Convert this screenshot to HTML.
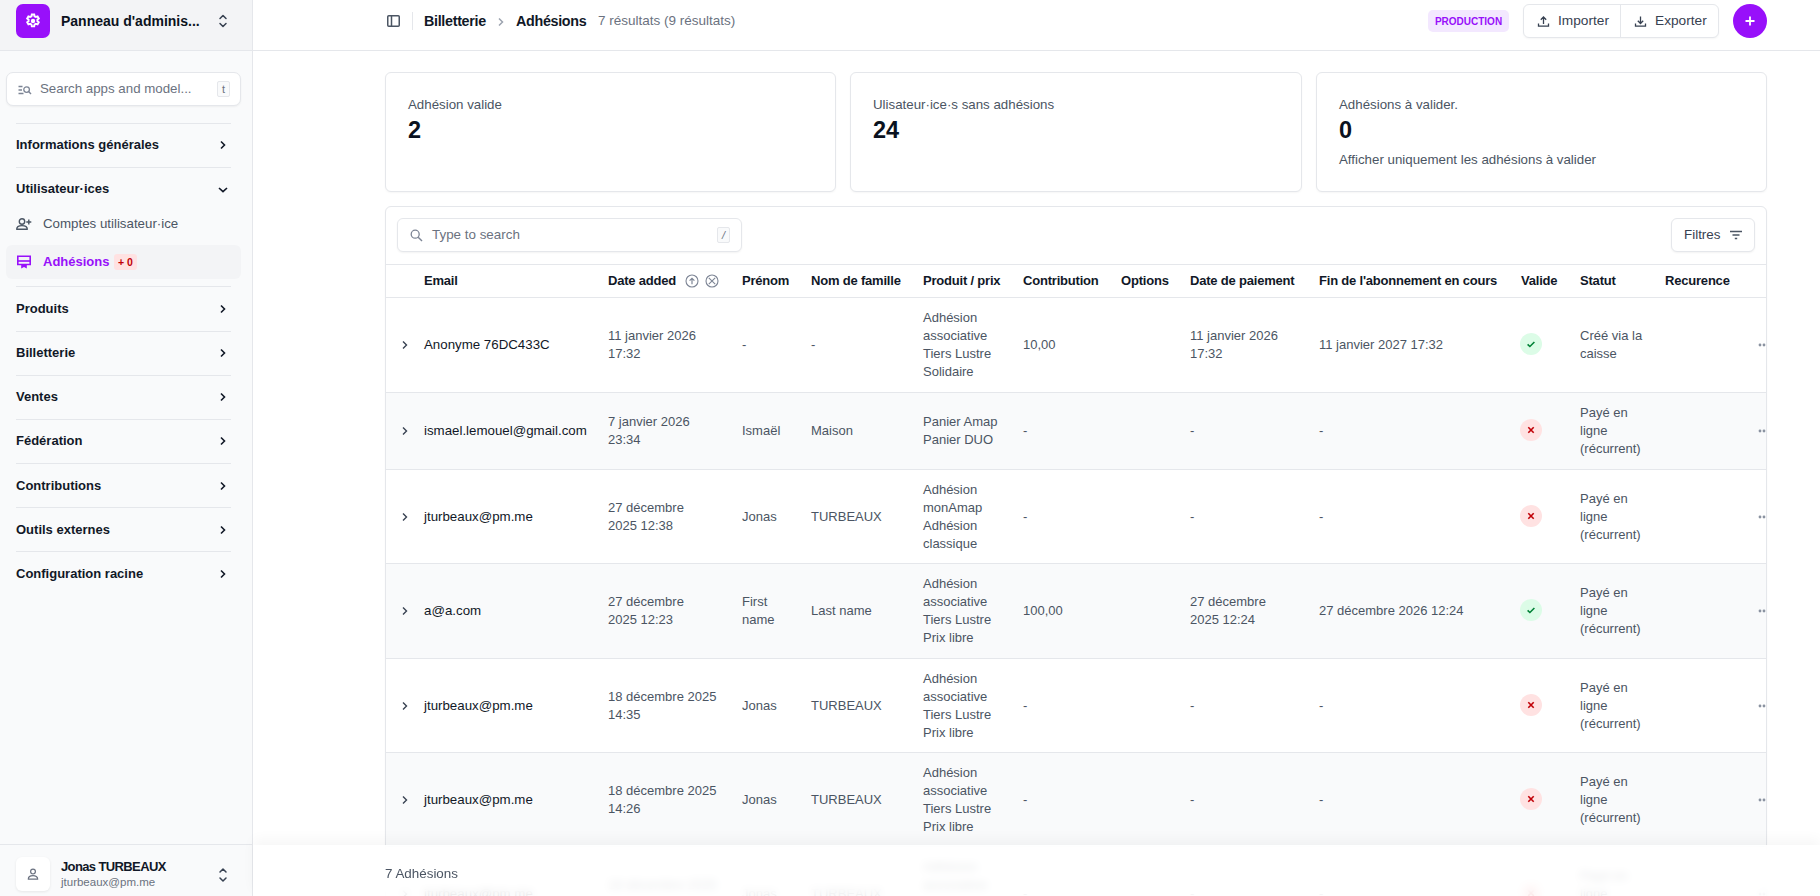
<!DOCTYPE html>
<html lang="fr">
<head>
<meta charset="utf-8">
<title>Adhésions</title>
<style>
*{box-sizing:border-box;margin:0;padding:0}
html,body{width:1820px;height:896px;overflow:hidden;background:#fff}
body{font-family:"Liberation Sans",sans-serif;color:#4b5563;position:relative;font-size:13px;line-height:18px}
.abs{position:absolute}
.nw{white-space:nowrap}
svg{display:block}
/* sidebar */
#sb{position:absolute;left:0;top:0;width:253px;height:896px;background:#f9fafb;border-right:1px solid #e5e7eb}
#sbh{position:absolute;left:0;top:0;width:252px;height:51px;background:#f3f4f6;border-bottom:1px solid #e5e7eb}
.sep{position:absolute;left:16px;width:215px;height:1px;background:#e5e7eb}
.nav{position:absolute;left:16px;font-weight:700;color:#111827;font-size:13px;line-height:18px;white-space:nowrap}
.chev{position:absolute;left:216px}
/* header */
#hdr{position:absolute;left:253px;top:0;width:1567px;height:51px;background:#fff;border-bottom:1px solid #e5e7eb}
/* cards */
.card{position:absolute;top:72px;height:120px;border:1px solid #e5e7eb;border-radius:6px;background:#fff;box-shadow:0 1px 2px rgba(0,0,0,.04)}
.card .lbl{position:absolute;left:22px;top:23px;font-size:13.3px;color:#4b5563;white-space:nowrap}
.card .val{position:absolute;left:22px;top:43px;font-size:23.5px;line-height:28px;font-weight:700;color:#0b1220;white-space:nowrap}
.card .sub{position:absolute;left:22px;top:78px;font-size:13.3px;color:#4b5563;white-space:nowrap}

#tbl{position:absolute;left:385px;top:206px;width:1382px;height:720px;border:1px solid #e5e7eb;border-radius:6px;background:#fff;overflow:hidden;box-shadow:0 1px 2px rgba(0,0,0,.04)}
.row{position:absolute;left:0;width:1380px}
.hl{position:absolute;left:0;width:1380px;height:1px;background:#e5e7eb}
.cell{position:absolute;top:0;height:100%;display:flex;align-items:center;white-space:nowrap;font-size:13px;line-height:18px;color:#4b5563}
.cell.em{color:#111827;font-size:13.3px}
.rchev{position:absolute;left:15px;top:50%;margin-top:-5px}
.rdots{position:absolute;left:1372px;top:50%;margin-top:-2px}
.th{position:absolute;top:65px;font-size:13px;line-height:18px;font-weight:700;color:#111827;white-space:nowrap;letter-spacing:-0.2px}
</style>
</head>
<body>
<!-- SIDEBAR -->
<div id="sb">
  <div id="sbh">
    <div class="abs" style="left:16px;top:4px;width:34px;height:34px;border-radius:7px;background:#9810fa"></div>
    <svg class="abs" style="left:25px;top:13px" width="16" height="16" viewBox="0 0 24 24"><path fill="none" stroke="#fff" stroke-width="2.9" stroke-linejoin="miter" d="M10.2 2.2h3.6l.5 2.7c.7.3 1.4.7 2 1.1l2.6-.9 1.8 3.1-2.1 1.8c.1.7.1 1.5 0 2.2l2.1 1.8-1.8 3.1-2.6-.9c-.6.5-1.3.9-2 1.2l-.5 2.7h-3.6l-.5-2.7c-.7-.3-1.4-.7-2-1.2l-2.6.9-1.8-3.1 2.1-1.8c-.1-.7-.1-1.5 0-2.2l-2.1-1.8 1.8-3.1 2.6.9c.6-.4 1.3-.8 2-1.1z"/><circle cx="12" cy="12" r="3.3" fill="#fff"/></svg>
    <div class="abs nw" style="left:61px;top:12px;font-size:14px;line-height:18px;font-weight:700;color:#0b1220">Panneau d'adminis...</div>
    <svg class="abs" style="left:217px;top:13px" width="12" height="16" viewBox="0 0 12 16"><path d="M3 5.5 6 2.5 9 5.5M3 10.5 6 13.5 9 10.5" fill="none" stroke="#374151" stroke-width="1.5" stroke-linecap="round" stroke-linejoin="round"/></svg>
  </div>
  <div class="abs" style="left:6px;top:72px;width:235px;height:34px;background:#fff;border:1px solid #e5e7eb;border-radius:7px;box-shadow:0 1px 2px rgba(0,0,0,.05)">
    <svg class="abs" style="left:11px;top:12px" width="14" height="10" viewBox="0 0 14 10"><path d="M0.5 1.5h4M0.5 5h3.5M0.5 8.5h5" stroke="#7d8595" stroke-width="1.3"/><circle cx="8.6" cy="4.6" r="2.8" fill="none" stroke="#7d8595" stroke-width="1.3"/><path d="M10.6 6.6 13 9" stroke="#7d8595" stroke-width="1.4"/></svg>
    <div class="abs nw" style="left:33px;top:7px;font-size:13.3px;line-height:18px;color:#6b7280">Search apps and model...</div>
    <div class="abs" style="left:210px;top:8px;width:13px;height:16px;border:1px solid #e5e7eb;border-radius:2px;background:#f9fafb;font-size:11px;line-height:14px;text-align:center;color:#6b7280">t</div>
  </div>
  <div class="sep" style="top:123px"></div>
  <div class="nav" style="top:136px">Informations générales</div>
  <svg class="chev" style="top:138px" width="14" height="14" viewBox="0 0 14 14"><path d="M5 3.5 8.5 7 5 10.5" fill="none" stroke="#111827" stroke-width="1.6"/></svg>
  <div class="sep" style="top:167px"></div>
  <div class="nav" style="top:180px">Utilisateur·ices</div>
  <svg class="chev" style="top:183px" width="14" height="14" viewBox="0 0 14 14"><path d="M3 5 7 8.7 11 5" fill="none" stroke="#111827" stroke-width="1.6"/></svg>
  <svg class="abs" style="left:15px;top:216px" width="18" height="16" viewBox="0 0 18 16"><circle cx="7" cy="5.5" r="2.7" fill="none" stroke="#4b5563" stroke-width="1.4"/><path d="M1.7 13.3c0-2.3 2.4-3.7 5.3-3.7s5.3 1.4 5.3 3.7z" fill="none" stroke="#4b5563" stroke-width="1.4" stroke-linejoin="round"/><path d="M13.8 3.5v5M11.3 6h5" stroke="#4b5563" stroke-width="1.4"/></svg>
  <div class="abs nw" style="left:43px;top:215px;font-size:13.3px;line-height:18px;color:#4b5563">Comptes utilisateur·ice</div>
  <div class="abs" style="left:6px;top:245px;width:235px;height:34px;background:#f3f4f6;border-radius:6px"></div>
  <svg class="abs" style="left:16px;top:254px" width="16" height="16" viewBox="0 0 16 16"><path d="M1.8 2.3h12.4v8.2H1.8z" fill="none" stroke="#9810fa" stroke-width="1.6"/><path d="M1.8 7h12.4" stroke="#9810fa" stroke-width="1.6"/><path d="M5.2 10.5v4l2.8-1.5 2.8 1.5v-4z" fill="#9810fa"/></svg>
  <div class="nav" style="left:43px;top:253px;color:#9810fa">Adhésions</div>
  <div class="abs" style="left:114px;top:254px;width:23px;height:16px;border-radius:3px;background:#ffe2e2;color:#c10007;font-size:10.5px;line-height:16px;font-weight:700;text-align:center">+ 0</div>
  <div class="sep" style="top:286px"></div>
  <div class="nav" style="top:300px">Produits</div>
  <svg class="chev" style="top:302px" width="14" height="14" viewBox="0 0 14 14"><path d="M5 3.5 8.5 7 5 10.5" fill="none" stroke="#111827" stroke-width="1.6"/></svg>
  <div class="sep" style="top:331px"></div>
  <div class="nav" style="top:344px">Billetterie</div>
  <svg class="chev" style="top:346px" width="14" height="14" viewBox="0 0 14 14"><path d="M5 3.5 8.5 7 5 10.5" fill="none" stroke="#111827" stroke-width="1.6"/></svg>
  <div class="sep" style="top:375px"></div>
  <div class="nav" style="top:388px">Ventes</div>
  <svg class="chev" style="top:390px" width="14" height="14" viewBox="0 0 14 14"><path d="M5 3.5 8.5 7 5 10.5" fill="none" stroke="#111827" stroke-width="1.6"/></svg>
  <div class="sep" style="top:419px"></div>
  <div class="nav" style="top:432px">Fédération</div>
  <svg class="chev" style="top:434px" width="14" height="14" viewBox="0 0 14 14"><path d="M5 3.5 8.5 7 5 10.5" fill="none" stroke="#111827" stroke-width="1.6"/></svg>
  <div class="sep" style="top:463px"></div>
  <div class="nav" style="top:477px">Contributions</div>
  <svg class="chev" style="top:479px" width="14" height="14" viewBox="0 0 14 14"><path d="M5 3.5 8.5 7 5 10.5" fill="none" stroke="#111827" stroke-width="1.6"/></svg>
  <div class="sep" style="top:507px"></div>
  <div class="nav" style="top:521px">Outils externes</div>
  <svg class="chev" style="top:523px" width="14" height="14" viewBox="0 0 14 14"><path d="M5 3.5 8.5 7 5 10.5" fill="none" stroke="#111827" stroke-width="1.6"/></svg>
  <div class="sep" style="top:551px"></div>
  <div class="nav" style="top:565px">Configuration racine</div>
  <svg class="chev" style="top:567px" width="14" height="14" viewBox="0 0 14 14"><path d="M5 3.5 8.5 7 5 10.5" fill="none" stroke="#111827" stroke-width="1.6"/></svg>
  <!-- user footer -->
  <div class="abs" style="left:0;top:844px;width:252px;height:52px;background:#f9fafb;border-top:1px solid #e5e7eb">
    <div class="abs" style="left:16px;top:12px;width:34px;height:34px;border-radius:6px;background:#fff;box-shadow:0 1px 3px rgba(0,0,0,.08)"></div>
    <svg class="abs" style="left:26px;top:22px" width="14" height="14" viewBox="0 0 14 14"><circle cx="7" cy="4.6" r="2.4" fill="none" stroke="#6b7280" stroke-width="1.2"/><path d="M2.3 12.2c0-2.2 2.1-3.6 4.7-3.6s4.7 1.4 4.7 3.6z" fill="none" stroke="#6b7280" stroke-width="1.2" stroke-linejoin="round"/></svg>
    <div class="abs nw" style="left:61px;top:13px;font-size:13px;line-height:18px;font-weight:700;color:#111827;letter-spacing:-0.62px">Jonas TURBEAUX</div>
    <div class="abs nw" style="left:61px;top:30px;font-size:11.5px;line-height:14px;color:#6b7280">jturbeaux@pm.me</div>
    <svg class="abs" style="left:217px;top:866px;top:22px" width="12" height="16" viewBox="0 0 12 16"><path d="M3 5 6 2 9 5M3 11 6 14 9 11" fill="none" stroke="#374151" stroke-width="1.5" stroke-linecap="round" stroke-linejoin="round"/></svg>
  </div>
</div>

<!-- HEADER -->
<div id="hdr">
  <svg class="abs" style="left:134px;top:15px" width="13" height="12" viewBox="0 0 13 12"><rect x="0.75" y="0.75" width="11.5" height="10.5" rx="1" fill="none" stroke="#4b5563" stroke-width="1.5"/><path d="M4.5 1v10" stroke="#4b5563" stroke-width="1.5"/></svg>
  <div class="abs" style="left:159px;top:12px;width:1px;height:18px;background:#e5e7eb"></div>
  <div class="abs nw" style="left:171px;top:12px;font-size:14.3px;line-height:18px;font-weight:700;letter-spacing:-0.3px;color:#111827">Billetterie</div>
  <svg class="abs" style="left:244px;top:17px" width="8" height="10" viewBox="0 0 8 10"><path d="M2 1.5 5.5 5 2 8.5" fill="none" stroke="#9ca3af" stroke-width="1.5"/></svg>
  <div class="abs nw" style="left:263px;top:12px;font-size:14.3px;line-height:18px;font-weight:700;letter-spacing:-0.3px;color:#111827">Adhésions</div>
  <div class="abs nw" style="left:345px;top:12px;font-size:13.5px;line-height:18px;color:#6b7280">7 résultats (9 résultats)</div>
  <div class="abs" style="left:1175px;top:10px;width:81px;height:22px;border-radius:5px;background:#f3e8ff;color:#9810fa;font-size:10px;line-height:23px;font-weight:700;text-align:center">PRODUCTION</div>
  <div class="abs" style="left:1270px;top:4px;width:196px;height:34px;border:1px solid #e5e7eb;border-radius:6px;background:#fff;box-shadow:0 1px 2px rgba(0,0,0,.04)">
    <div class="abs" style="left:96px;top:0;width:1px;height:32px;background:#e5e7eb"></div>
    <svg class="abs" style="left:13px;top:10px" width="13" height="13" viewBox="0 0 13 13"><path d="M6.5 9V2M3.8 4.7 6.5 2 9.2 4.7M1.5 8.5v2.7h10v-2.7" fill="none" stroke="#374151" stroke-width="1.3"/></svg>
    <div class="abs nw" style="left:34px;top:7px;font-size:13.7px;line-height:18px;color:#374151">Importer</div>
    <svg class="abs" style="left:110px;top:10px" width="13" height="13" viewBox="0 0 13 13"><path d="M6.5 1.5v7M3.8 5.8 6.5 8.5 9.2 5.8M1.5 8.5v2.7h10v-2.7" fill="none" stroke="#374151" stroke-width="1.3"/></svg>
    <div class="abs nw" style="left:131px;top:7px;font-size:13.7px;line-height:18px;color:#374151">Exporter</div>
  </div>
  <div class="abs" style="left:1480px;top:4px;width:34px;height:34px;border-radius:50%;background:#9810fa"></div>
  <svg class="abs" style="left:1491px;top:15px" width="12" height="12" viewBox="0 0 12 12"><path d="M6 1.5v9M1.5 6h9" stroke="#fff" stroke-width="1.8"/></svg>
</div>

<!-- CARDS -->
<div class="card" style="left:385px;width:451px">
  <div class="lbl">Adhésion valide</div>
  <div class="val">2</div>
</div>
<div class="card" style="left:850px;width:452px">
  <div class="lbl">Ulisateur·ice·s sans adhésions</div>
  <div class="val">24</div>
</div>
<div class="card" style="left:1316px;width:451px">
  <div class="lbl">Adhésions à valider.</div>
  <div class="val">0</div>
  <div class="sub">Afficher uniquement les adhésions à valider</div>
</div>

<div id="tbl">
  <div class="abs" style="left:11px;top:11px;width:345px;height:34px;border:1px solid #e5e7eb;border-radius:6px;background:#fff;box-shadow:0 1px 2px rgba(0,0,0,.05)">
    <svg class="abs" style="left:12px;top:10px" width="13" height="13" viewBox="0 0 13 13"><circle cx="5.2" cy="5.2" r="4" fill="none" stroke="#7d8595" stroke-width="1.3"/><path d="M8.2 8.2 12 12" stroke="#7d8595" stroke-width="1.4"/></svg>
    <div class="abs nw" style="left:34px;top:7px;font-size:13.4px;line-height:18px;color:#6b7280">Type to search</div>
    <div class="abs" style="left:319px;top:8px;width:13px;height:16px;border:1px solid #e5e7eb;border-radius:2px;background:#f9fafb;font-size:11px;line-height:14px;text-align:center;color:#6b7280;font-style:italic">/</div>
  </div>
  <div class="abs" style="left:1285px;top:11px;width:84px;height:34px;border:1px solid #e5e7eb;border-radius:6px;background:#fff;box-shadow:0 1px 2px rgba(0,0,0,.05)">
    <div class="abs nw" style="left:12px;top:7px;font-size:13.4px;line-height:18px;color:#374151">Filtres</div>
    <svg class="abs" style="left:57px;top:11px" width="14" height="10" viewBox="0 0 14 10"><path d="M1 1.5h12M3.5 5h7M5.8 8.5h2.4" stroke="#4b5563" stroke-width="1.4"/></svg>
  </div>
  <div class="hl" style="top:57px"></div>
  <div class="th" style="left:38px">Email</div>
  <div class="th" style="left:222px">Date added</div>
  <svg class="abs" style="left:299px;top:67px" width="14" height="14" viewBox="0 0 14 14"><circle cx="7" cy="7" r="6" fill="none" stroke="#7d8595" stroke-width="1.1"/><path d="M7 10.2V4.6M4.6 6.7 7 4.3 9.4 6.7" fill="none" stroke="#7d8595" stroke-width="1.2"/></svg>
  <svg class="abs" style="left:319px;top:67px" width="14" height="14" viewBox="0 0 14 14"><circle cx="7" cy="7" r="6" fill="none" stroke="#7d8595" stroke-width="1.1"/><path d="M3.8 3.8l6.4 6.4M10.2 3.8l-6.4 6.4" stroke="#7d8595" stroke-width="1.1"/></svg>
  <div class="th" style="left:356px">Prénom</div>
  <div class="th" style="left:425px">Nom de famille</div>
  <div class="th" style="left:537px">Produit / prix</div>
  <div class="th" style="left:637px">Contribution</div>
  <div class="th" style="left:735px">Options</div>
  <div class="th" style="left:804px">Date de paiement</div>
  <div class="th" style="left:933px">Fin de l'abonnement en cours</div>
  <div class="th" style="left:1135px">Valide</div>
  <div class="th" style="left:1194px">Statut</div>
  <div class="th" style="left:1279px">Recurence</div>
  <div class="hl" style="top:90px"></div>
<div class="row" style="top:91px;height:94px;background:#fff">
<svg class="rchev" width="8" height="10" viewBox="0 0 8 10"><path d="M2 1.5 5.5 5 2 8.5" fill="none" stroke="#374151" stroke-width="1.4"/></svg>
<div class="cell em" style="left:38px"><div>Anonyme 76DC433C</div></div>
<div class="cell" style="left:222px"><div>11 janvier 2026<br>17:32</div></div>
<div class="cell" style="left:356px"><div>-</div></div>
<div class="cell" style="left:425px"><div>-</div></div>
<div class="cell" style="left:537px"><div>Adhésion<br>associative<br>Tiers Lustre<br>Solidaire</div></div>
<div class="cell" style="left:637px"><div>10,00</div></div>
<div class="cell" style="left:804px"><div>11 janvier 2026<br>17:32</div></div>
<div class="cell" style="left:933px"><div>11 janvier 2027 17:32</div></div>
<div class="cell" style="left:1194px"><div>Créé via la<br>caisse</div></div>
<div class="cell" style="left:1134px;top:-1px"><svg width="22" height="22" viewBox="0 0 22 22"><circle cx="11" cy="11" r="11" fill="#dcfce7"/><path d="M7.6 11.3 9.9 13.5 14.4 9" fill="none" stroke="#008236" stroke-width="1.6"/></svg></div>
<svg class="rdots" width="10" height="4" viewBox="0 0 10 4"><circle cx="2" cy="2" r="1.4" fill="#8b93a1"/><circle cx="6" cy="2" r="1.4" fill="#8b93a1"/></svg>
</div>
<div class="hl" style="top:185px"></div>
<div class="row" style="top:186px;height:76px;background:#f9fafb">
<svg class="rchev" width="8" height="10" viewBox="0 0 8 10"><path d="M2 1.5 5.5 5 2 8.5" fill="none" stroke="#374151" stroke-width="1.4"/></svg>
<div class="cell em" style="left:38px"><div>ismael.lemouel@gmail.com</div></div>
<div class="cell" style="left:222px"><div>7 janvier 2026<br>23:34</div></div>
<div class="cell" style="left:356px"><div>Ismaël</div></div>
<div class="cell" style="left:425px"><div>Maison</div></div>
<div class="cell" style="left:537px"><div>Panier Amap<br>Panier DUO</div></div>
<div class="cell" style="left:637px"><div>-</div></div>
<div class="cell" style="left:804px"><div>-</div></div>
<div class="cell" style="left:933px"><div>-</div></div>
<div class="cell" style="left:1194px"><div>Payé en<br>ligne<br>(récurrent)</div></div>
<div class="cell" style="left:1134px;top:-1px"><svg width="22" height="22" viewBox="0 0 22 22"><circle cx="11" cy="11" r="11" fill="#ffe2e2"/><path d="M8.3 8.3l5.4 5.4M13.7 8.3l-5.4 5.4" stroke="#c10007" stroke-width="1.6"/></svg></div>
<svg class="rdots" width="10" height="4" viewBox="0 0 10 4"><circle cx="2" cy="2" r="1.4" fill="#8b93a1"/><circle cx="6" cy="2" r="1.4" fill="#8b93a1"/></svg>
</div>
<div class="hl" style="top:262px"></div>
<div class="row" style="top:263px;height:93px;background:#fff">
<svg class="rchev" width="8" height="10" viewBox="0 0 8 10"><path d="M2 1.5 5.5 5 2 8.5" fill="none" stroke="#374151" stroke-width="1.4"/></svg>
<div class="cell em" style="left:38px"><div>jturbeaux@pm.me</div></div>
<div class="cell" style="left:222px"><div>27 décembre<br>2025 12:38</div></div>
<div class="cell" style="left:356px"><div>Jonas</div></div>
<div class="cell" style="left:425px"><div>TURBEAUX</div></div>
<div class="cell" style="left:537px"><div>Adhésion<br>monAmap<br>Adhésion<br>classique</div></div>
<div class="cell" style="left:637px"><div>-</div></div>
<div class="cell" style="left:804px"><div>-</div></div>
<div class="cell" style="left:933px"><div>-</div></div>
<div class="cell" style="left:1194px"><div>Payé en<br>ligne<br>(récurrent)</div></div>
<div class="cell" style="left:1134px;top:-1px"><svg width="22" height="22" viewBox="0 0 22 22"><circle cx="11" cy="11" r="11" fill="#ffe2e2"/><path d="M8.3 8.3l5.4 5.4M13.7 8.3l-5.4 5.4" stroke="#c10007" stroke-width="1.6"/></svg></div>
<svg class="rdots" width="10" height="4" viewBox="0 0 10 4"><circle cx="2" cy="2" r="1.4" fill="#8b93a1"/><circle cx="6" cy="2" r="1.4" fill="#8b93a1"/></svg>
</div>
<div class="hl" style="top:356px"></div>
<div class="row" style="top:357px;height:94px;background:#f9fafb">
<svg class="rchev" width="8" height="10" viewBox="0 0 8 10"><path d="M2 1.5 5.5 5 2 8.5" fill="none" stroke="#374151" stroke-width="1.4"/></svg>
<div class="cell em" style="left:38px"><div>a@a.com</div></div>
<div class="cell" style="left:222px"><div>27 décembre<br>2025 12:23</div></div>
<div class="cell" style="left:356px"><div>First<br>name</div></div>
<div class="cell" style="left:425px"><div>Last name</div></div>
<div class="cell" style="left:537px"><div>Adhésion<br>associative<br>Tiers Lustre<br>Prix libre</div></div>
<div class="cell" style="left:637px"><div>100,00</div></div>
<div class="cell" style="left:804px"><div>27 décembre<br>2025 12:24</div></div>
<div class="cell" style="left:933px"><div>27 décembre 2026 12:24</div></div>
<div class="cell" style="left:1194px"><div>Payé en<br>ligne<br>(récurrent)</div></div>
<div class="cell" style="left:1134px;top:-1px"><svg width="22" height="22" viewBox="0 0 22 22"><circle cx="11" cy="11" r="11" fill="#dcfce7"/><path d="M7.6 11.3 9.9 13.5 14.4 9" fill="none" stroke="#008236" stroke-width="1.6"/></svg></div>
<svg class="rdots" width="10" height="4" viewBox="0 0 10 4"><circle cx="2" cy="2" r="1.4" fill="#8b93a1"/><circle cx="6" cy="2" r="1.4" fill="#8b93a1"/></svg>
</div>
<div class="hl" style="top:451px"></div>
<div class="row" style="top:452px;height:93px;background:#fff">
<svg class="rchev" width="8" height="10" viewBox="0 0 8 10"><path d="M2 1.5 5.5 5 2 8.5" fill="none" stroke="#374151" stroke-width="1.4"/></svg>
<div class="cell em" style="left:38px"><div>jturbeaux@pm.me</div></div>
<div class="cell" style="left:222px"><div>18 décembre 2025<br>14:35</div></div>
<div class="cell" style="left:356px"><div>Jonas</div></div>
<div class="cell" style="left:425px"><div>TURBEAUX</div></div>
<div class="cell" style="left:537px"><div>Adhésion<br>associative<br>Tiers Lustre<br>Prix libre</div></div>
<div class="cell" style="left:637px"><div>-</div></div>
<div class="cell" style="left:804px"><div>-</div></div>
<div class="cell" style="left:933px"><div>-</div></div>
<div class="cell" style="left:1194px"><div>Payé en<br>ligne<br>(récurrent)</div></div>
<div class="cell" style="left:1134px;top:-1px"><svg width="22" height="22" viewBox="0 0 22 22"><circle cx="11" cy="11" r="11" fill="#ffe2e2"/><path d="M8.3 8.3l5.4 5.4M13.7 8.3l-5.4 5.4" stroke="#c10007" stroke-width="1.6"/></svg></div>
<svg class="rdots" width="10" height="4" viewBox="0 0 10 4"><circle cx="2" cy="2" r="1.4" fill="#8b93a1"/><circle cx="6" cy="2" r="1.4" fill="#8b93a1"/></svg>
</div>
<div class="hl" style="top:545px"></div>
<div class="row" style="top:546px;height:93px;background:#f9fafb">
<svg class="rchev" width="8" height="10" viewBox="0 0 8 10"><path d="M2 1.5 5.5 5 2 8.5" fill="none" stroke="#374151" stroke-width="1.4"/></svg>
<div class="cell em" style="left:38px"><div>jturbeaux@pm.me</div></div>
<div class="cell" style="left:222px"><div>18 décembre 2025<br>14:26</div></div>
<div class="cell" style="left:356px"><div>Jonas</div></div>
<div class="cell" style="left:425px"><div>TURBEAUX</div></div>
<div class="cell" style="left:537px"><div>Adhésion<br>associative<br>Tiers Lustre<br>Prix libre</div></div>
<div class="cell" style="left:637px"><div>-</div></div>
<div class="cell" style="left:804px"><div>-</div></div>
<div class="cell" style="left:933px"><div>-</div></div>
<div class="cell" style="left:1194px"><div>Payé en<br>ligne<br>(récurrent)</div></div>
<div class="cell" style="left:1134px;top:-1px"><svg width="22" height="22" viewBox="0 0 22 22"><circle cx="11" cy="11" r="11" fill="#ffe2e2"/><path d="M8.3 8.3l5.4 5.4M13.7 8.3l-5.4 5.4" stroke="#c10007" stroke-width="1.6"/></svg></div>
<svg class="rdots" width="10" height="4" viewBox="0 0 10 4"><circle cx="2" cy="2" r="1.4" fill="#8b93a1"/><circle cx="6" cy="2" r="1.4" fill="#8b93a1"/></svg>
</div>
<div class="hl" style="top:639px"></div>
<div class="row" style="top:640px;height:93px;background:#fff">
<svg class="rchev" width="8" height="10" viewBox="0 0 8 10"><path d="M2 1.5 5.5 5 2 8.5" fill="none" stroke="#374151" stroke-width="1.4"/></svg>
<div class="cell em" style="left:38px"><div>jturbeaux@pm.me</div></div>
<div class="cell" style="left:222px"><div>18 décembre 2025<br>14:20</div></div>
<div class="cell" style="left:356px"><div>Jonas</div></div>
<div class="cell" style="left:425px"><div>TURBEAUX</div></div>
<div class="cell" style="left:537px"><div>Adhésion<br>associative<br>Tiers Lustre<br>Prix libre</div></div>
<div class="cell" style="left:637px"><div>-</div></div>
<div class="cell" style="left:804px"><div>-</div></div>
<div class="cell" style="left:933px"><div>-</div></div>
<div class="cell" style="left:1194px"><div>Payé en<br>ligne<br>(récurrent)</div></div>
<div class="cell" style="left:1134px;top:-1px"><svg width="22" height="22" viewBox="0 0 22 22"><circle cx="11" cy="11" r="11" fill="#ffe2e2"/><path d="M8.3 8.3l5.4 5.4M13.7 8.3l-5.4 5.4" stroke="#c10007" stroke-width="1.6"/></svg></div>
<svg class="rdots" width="10" height="4" viewBox="0 0 10 4"><circle cx="2" cy="2" r="1.4" fill="#8b93a1"/><circle cx="6" cy="2" r="1.4" fill="#8b93a1"/></svg>
</div>
<div class="hl" style="top:733px"></div>
</div>
<div class="abs" style="left:253px;top:845px;width:1567px;height:51px;background:rgba(255,255,255,.86);backdrop-filter:blur(4px);-webkit-backdrop-filter:blur(4px);box-shadow:0 -6px 12px rgba(17,24,39,.035)">
  <div class="abs nw" style="left:132px;top:20px;font-size:13.4px;line-height:18px;color:#4b5563">7 Adhésions</div>
</div>
</body>
</html>
